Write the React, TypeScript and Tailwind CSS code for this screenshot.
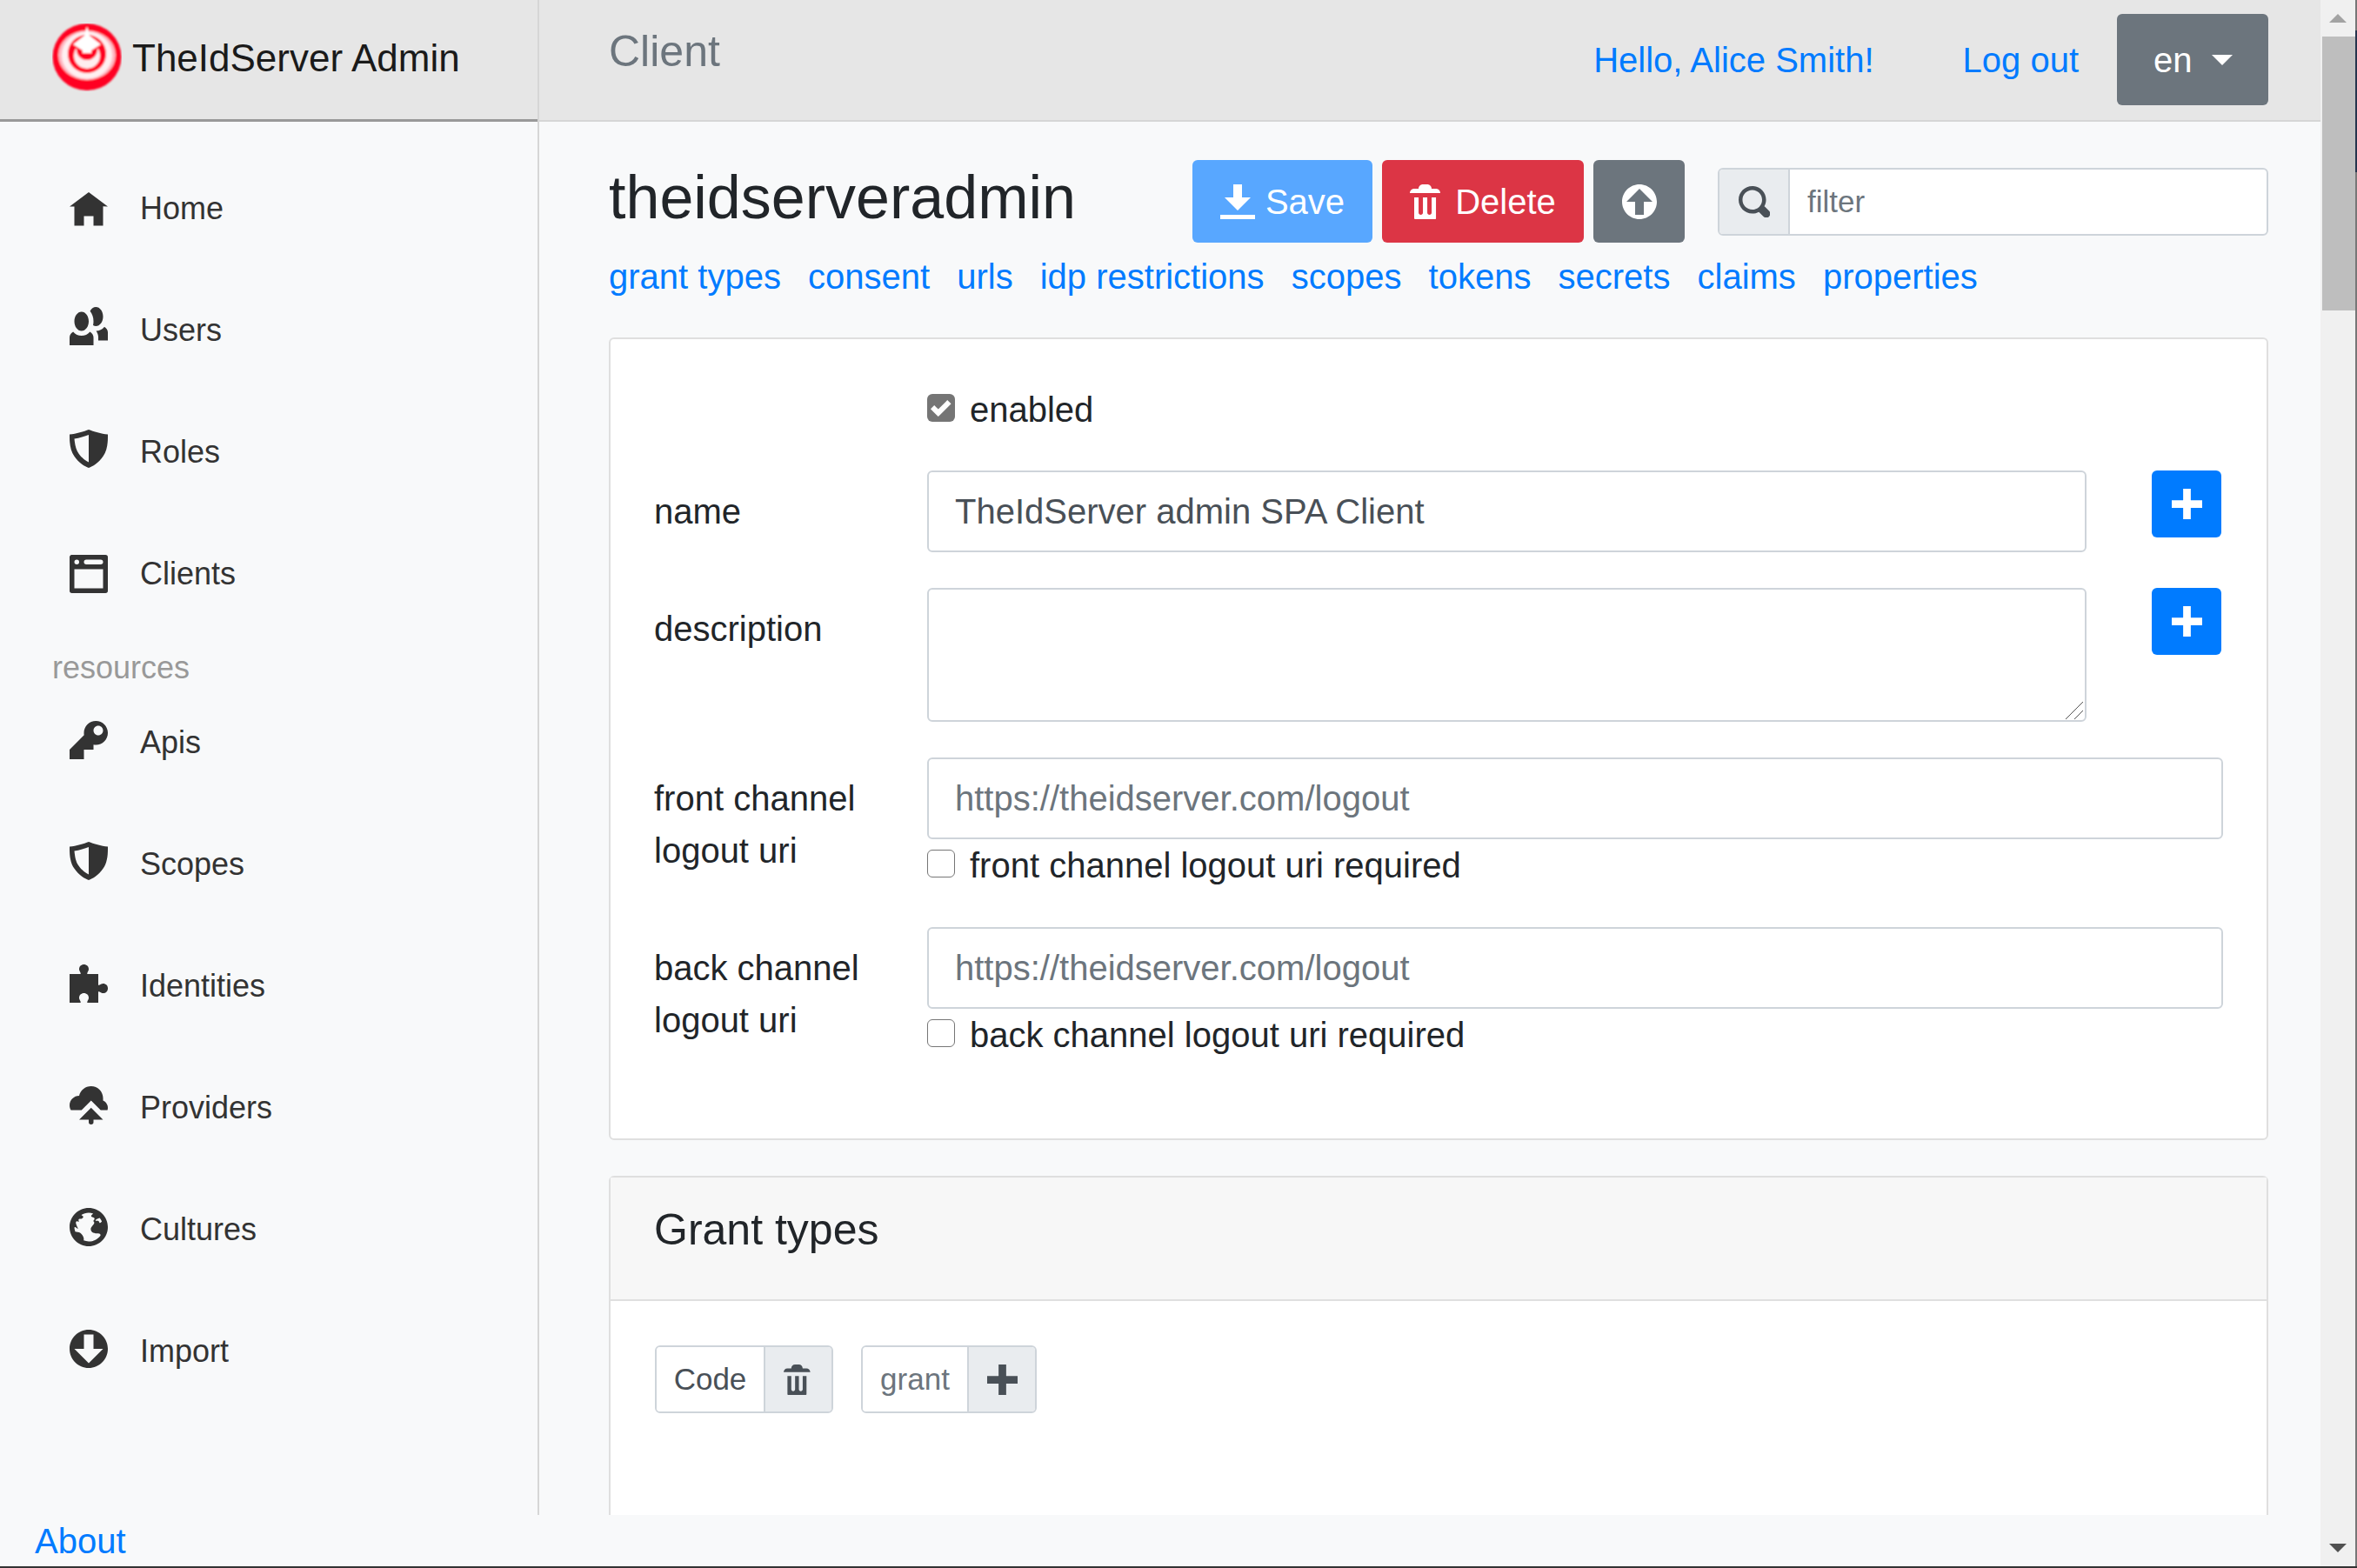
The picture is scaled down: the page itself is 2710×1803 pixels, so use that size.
import { ReactNode } from "react";

const paths = {
  home: "M4 0l-4 3h1v4h2v-2h2v2h2v-4.03l1 .03-4-3z",
  people:
    "M5.5 0c-.51 0-.95.35-1.22.88.45.54.72 1.28.72 2.13 0 .29-.03.55-.09.81.19.11.38.19.59.19.83 0 1.5-.9 1.5-2s-.67-2-1.5-2zm-3 1c-.83 0-1.5.9-1.5 2s.67 2 1.5 2 1.5-.9 1.5-2-.67-2-1.5-2zm4.75 3.16c-.43.51-1.02.82-1.69.84.27.38.44.84.44 1.34v.66h2v-1.66c0-.52-.31-.97-.75-1.19zm-6.5 1c-.44.22-.75.67-.75 1.19v1.66h5v-1.66c0-.52-.31-.97-.75-1.19-.45.53-1.06.84-1.75.84s-1.3-.32-1.75-.84z",
  shield:
    "M4 0c-1 .4-2.6.9-4 1v.5c0 1.5.2 3 1 4.1C2 7.1 3.2 7.7 4 8c.8-.3 2-.9 3-2.4.8-1.1 1-2.6 1-4.1V1C6.6.9 5 .4 4 0zm0 1.1v5.7c-.6-.3-1.4-.8-2.1-1.8C1.3 4.2 1.1 3 1 1.9c1.1-.1 2.2-.5 3-.8z",
  browser:
    "M.34 0a.5.5 0 0 0-.34.5v7a.5.5 0 0 0 .5.5h7a.5.5 0 0 0 .5-.5v-7a.5.5 0 0 0-.5-.5h-7a.5.5 0 0 0-.09 0 .5.5 0 0 0-.06 0zm1.16 1a.5.5 0 1 1 0 1 .5.5 0 0 1 0-1zm2 0h3a.5.5 0 1 1 0 1h-3a.5.5 0 1 1 0-1zm-2.5 2h6v4h-6v-4z",
  key: "M5.5 0c-1.38 0-2.5 1.12-2.5 2.5 0 .16 0 .32.03.47l-3.03 3.03v2h3v-2h2v-1l.03-.03c.15.03.31.03.47.03 1.38 0 2.5-1.12 2.5-2.5s-1.12-2.5-2.5-2.5zm.5 1c.55 0 1 .45 1 1s-.45 1-1 1-1-.45-1-1 .45-1 1-1z",
  puzzle:
    "M3 0c-.28 0-.54.1-.72.28-.18.18-.28.44-.28.72 0 .28.18.48.28.72.03.06.03.16.03.28h-2.31v6h2.31c0-.12 0-.22-.03-.28-.1-.24-.28-.44-.28-.72 0-.28.1-.54.28-.72.18-.18.44-.28.72-.28.28 0 .54.1.72.28.18.18.28.44.28.72 0 .28-.18.48-.28.72-.03.06-.03.16-.03.28h2.31v-2.31c.12 0 .22 0 .28.03.24.1.44.28.72.28.28 0 .54-.1.72-.28.18-.18.28-.44.28-.72 0-.28-.1-.54-.28-.72-.18-.18-.44-.28-.72-.28-.28 0-.48.18-.72.28-.06.03-.16.03-.28.03v-2.31h-2.31c0-.12 0-.22.03-.28.1-.24.28-.44.28-.72 0-.28-.1-.54-.28-.72-.18-.18-.44-.28-.72-.28z",
  cloudUpload:
    "M4.5 0c-1.21 0-2.27.86-2.5 2-1.1 0-2 .9-2 2 0 .37.11.71.28 1h2.22l2-2 2 2h1.41c.06-.16.09-.32.09-.5 0-.65-.42-1.29-1-1.5v-.5c0-1.38-1.12-2.5-2.5-2.5zm0 4.5l-2.5 2.5h2v.5a.5.5 0 1 0 1 0v-.5h2l-2.5-2.5z",
  globe:
    "M4 0c-2.21 0-4 1.79-4 4s1.79 4 4 4 4-1.79 4-4-1.79-4-4-4zm0 1c.33 0 .64.09.94.19-.21.2-.45.38-.41.56.04.18.69.13.69.5 0 .27-.42.35-.13.66.35.35-.64.98-.66 1.44-.03.83.84.97 1.53.97.42 0 .53.2.5.44-.54.77-1.46 1.25-2.47 1.25-.38 0-.73-.09-1.06-.22.22-.44-.28-1.31-.75-1.59-.23-.23-.72-.14-1-.25-.09-.27-.18-.54-.19-.84.03-.05.08-.09.16-.09.19 0 .45.38.59.34.18-.04-.74-1.31-.31-1.56.2-.12.6.39.47-.16-.12-.51.36-.28.66-.41.26-.11.45-.41.13-.59-.06-.03-.13-.1-.22-.19.45-.27.97-.44 1.53-.44zm2.31 1.09c.18.22.32.46.44.72 0 .01 0 .02 0 .03-.04.07-.11.11-.22.22-.28.28-.32-.21-.44-.31-.13-.12-.6.02-.66-.13-.07-.18.5-.42.88-.53z",
  arrowDown:
    "M4 0c-2.21 0-4 1.79-4 4s1.79 4 4 4 4-1.79 4-4-1.79-4-4-4zm-1 1h2v3h2l-3 3-3-3h2v-3z",
  arrowUp:
    "M4 0c-2.21 0-4 1.79-4 4s1.79 4 4 4 4-1.79 4-4-1.79-4-4-4zm0 1l3 3h-2v3h-2v-3h-2l3-3z",
  download: "M3 0v3h-2l3 3 3-3h-2v-3h-2zm-3 7v1h8v-1h-8z",
  trash:
    "M3 0c-.55 0-1 .45-1 1h-1c-.55 0-1 .45-1 1h7c0-.55-.45-1-1-1h-1c0-.55-.45-1-1-1h-1zm-2 3v4.81c0 .11.08.19.19.19h4.63c.11 0 .19-.08.19-.19v-4.81h-1v3.5c0 .28-.22.5-.5.5s-.5-.22-.5-.5v-3.5h-1v3.5c0 .28-.22.5-.5.5s-.5-.22-.5-.5v-3.5h-1z",
  plus: "M3 0v3h-3v2h3v3h2v-3h3v-2h-3v-3h-2z",
  search:
    "M3.5 0c-1.93 0-3.5 1.57-3.5 3.5s1.57 3.5 3.5 3.5c.59 0 1.17-.14 1.66-.41a1 1 0 0 0 .13.13l1 1a1.02 1.02 0 1 0 1.44-1.44l-1-1a1 1 0 0 0-.16-.13c.27-.49.44-1.06.44-1.66 0-1.93-1.57-3.5-3.5-3.5zm0 1c1.39 0 2.5 1.11 2.5 2.5 0 .66-.24 1.27-.66 1.72-.01.01-.02.02-.03.03a1 1 0 0 0-.13.13c-.44.4-1.04.63-1.69.63-1.39 0-2.5-1.11-2.5-2.5s1.11-2.5 2.5-2.5z",
  check: "M6.41 1l-.69.72-2.78 2.78-.81-.78-.72-.72-1.41 1.41.72.72 1.5 1.5.69.72.72-.72 3.5-3.5.72-.72-1.44-1.41z",
};

function Icon({ d, className }: { d: string; className?: string }) {
  return (
    <svg viewBox="0 0 8 8" className={className} fill="currentColor" fillRule="evenodd">
      <path d={d} />
    </svg>
  );
}

function Logo() {
  return (
    <svg viewBox="0 0 80 78" className="w-[80px] h-[78px] shrink-0">
      <defs>
        <filter id="soft">
          <feGaussianBlur stdDeviation="0.8" />
        </filter>
      </defs>
      <g filter="url(#soft)">
        <ellipse cx="40" cy="38.5" rx="39.5" ry="38.5" fill="#ff0022" />
        <ellipse cx="40" cy="36.5" rx="33" ry="28.5" fill="#ffb9c3" />
        <ellipse cx="40" cy="36.5" rx="29" ry="27" fill="#fff0f2" />
        <ellipse cx="40" cy="35" rx="22" ry="22" fill="#ff0022" />
        <ellipse cx="40" cy="37" rx="15" ry="15" fill="#ffeef0" />
        <ellipse cx="40" cy="30" rx="12" ry="12" fill="#ff0022" />
        <path d="M40 3l3 11 13 10-11 7v3h-10v-3l-11-7 13-10z" fill="#ffffff" />
      </g>
    </svg>
  );
}

function NavItem({ d, label, shift }: { d: string; label: string; shift?: string }) {
  return (
    <a className="h-[140px] pl-[80px] flex items-center gap-[37px] text-[36px] text-[#333333]">
      <Icon d={d} className={`w-[44px] h-[44px] shrink-0 ${shift ?? ""}`} />
      <span>{label}</span>
    </a>
  );
}

function Sidebar() {
  return (
    <aside className="w-[620px] shrink-0 border-r-2 border-[#d6d6d6] flex flex-col">
      <div className="h-[140px] bg-[#e6e6e6] border-b-[3px] border-[#999999] pl-[60px] pb-[6px] flex items-center gap-[12px] text-[44px] text-[#1a1a1a]">
        <Logo />
        <span className="translate-y-[1px]">TheIdServer Admin</span>
      </div>
      <nav className="pt-[30px] flex flex-col">
        <NavItem d={paths.home} label="Home" shift="translate-y-[3px]" />
        <NavItem d={paths.people} label="Users" shift="-translate-y-[5px]" />
        <NavItem d={paths.shield} label="Roles" shift="-translate-y-[4px]" />
        <NavItem d={paths.browser} label="Clients" />
        <div className="h-[54px] pl-[60px] pt-[20px] text-[36px] leading-[36px] text-[#999999]">resources</div>
        <NavItem d={paths.key} label="Apis" shift="-translate-y-[3px]" />
        <NavItem d={paths.shield} label="Scopes" shift="-translate-y-[4px]" />
        <NavItem d={paths.puzzle} label="Identities" shift="-translate-y-[3px]" />
        <NavItem d={paths.cloudUpload} label="Providers" shift="-translate-y-[3px]" />
        <NavItem d={paths.globe} label="Cultures" shift="-translate-y-[3px]" />
        <NavItem d={paths.arrowDown} label="Import" shift="-translate-y-[3px]" />
      </nav>
    </aside>
  );
}

function TopBar() {
  return (
    <header className="h-[140px] shrink-0 bg-[#e6e6e6] border-b-[2px] border-[#d6d6d6] pl-[80px] pr-[60px] flex items-start">
      <div className="mt-[29px] text-[50px] leading-[60px] text-[#6c757d]">Client</div>
      <div className="ml-auto mt-[16px] flex items-center text-[40px] text-[#007bff]">
        <a className="mr-[102px]">Hello, Alice Smith!</a>
        <a className="mr-[44px]">Log out</a>
        <button className="w-[174px] h-[105px] pl-[42px] rounded-[6px] bg-[#6c757d] text-white flex items-center gap-[22px]">
          en
          <span className="w-0 h-0 border-x-[12px] border-x-transparent border-t-[12px] border-t-white" />
        </button>
      </div>
    </header>
  );
}

function Btn({ className, children }: { className: string; children: ReactNode }) {
  return (
    <button className={`h-[95px] rounded-[6px] text-white text-[40px] flex items-center justify-center gap-[12px] ${className}`}>
      {children}
    </button>
  );
}

function TitleRow() {
  return (
    <div className="flex items-center h-[95px]">
      <h1 className="w-[671px] shrink-0 pb-[10px] text-[70px] leading-[84px] text-[#212529]">theidserveradmin</h1>
      <div className="flex gap-[11px]">
        <Btn className="w-[207px] bg-[#58a7ff]">
          <Icon d={paths.download} className="w-[40px] h-[40px]" />
          Save
        </Btn>
        <Btn className="w-[232px] bg-[#dc3545]">
          <Icon d={paths.trash} className="w-[40px] h-[40px]" />
          Delete
        </Btn>
        <Btn className="w-[105px] bg-[#6c757d]">
          <Icon d={paths.arrowUp} className="w-[40px] h-[40px]" />
        </Btn>
      </div>
      <div className="ml-[38px] flex-1 h-[78px] flex border-2 border-[#ced4da] rounded-[6px] overflow-hidden bg-white">
        <div className="w-[81px] shrink-0 bg-[#e9ecef] border-r-2 border-[#ced4da] flex items-center justify-center text-[#495057]">
          <Icon d={paths.search} className="w-[36px] h-[36px]" />
        </div>
        <input
          placeholder="filter"
          className="flex-1 min-w-0 pl-[20px] pt-[2px] text-[35px] outline-none placeholder:text-[#6c757d]"
        />
      </div>
    </div>
  );
}

const sectionLinks = [
  "grant types",
  "consent",
  "urls",
  "idp restrictions",
  "scopes",
  "tokens",
  "secrets",
  "claims",
  "properties",
];

function SectionLinks() {
  return (
    <div className="mt-[9px] flex gap-[31.1px] text-[40px] leading-[60px] text-[#007bff]">
      {sectionLinks.map((l) => (
        <a key={l}>{l}</a>
      ))}
    </div>
  );
}

function CheckRow({ label, checked }: { label: string; checked?: boolean }) {
  return (
    <label className="h-[60px] flex items-center gap-[17px] text-[40px] text-[#212529]">
      {checked ? (
        <span className="w-[32px] h-[32px] -translate-y-[2px] rounded-[6px] bg-[#757575] text-white flex items-center justify-center">
          <Icon d={paths.check} className="w-[24px] h-[24px]" />
        </span>
      ) : (
        <span className="w-[32px] h-[32px] -translate-y-[2px] rounded-[6px] border border-[#767676] bg-white" />
      )}
      {label}
    </label>
  );
}

function Field({ label, className, children }: { label: ReactNode; className?: string; children: ReactNode }) {
  return (
    <div className={`flex ${className ?? ""}`}>
      <div className="w-[314px] shrink-0 pt-[17px] text-[40px] leading-[60px] text-[#212529]">{label}</div>
      <div className="flex-1 min-w-0">{children}</div>
    </div>
  );
}

const inputCls =
  "w-full h-[94px] px-[30px] border-2 border-[#ced4da] rounded-[6px] bg-white text-[40px] text-[#495057] outline-none placeholder:text-[#6c757d]";

function AddButton() {
  return (
    <button className="ml-[75px] mr-[2px] w-[80px] h-[77px] shrink-0 rounded-[6px] bg-[#007bff] text-white flex items-center justify-center">
      <Icon d={paths.plus} className="w-[35px] h-[35px]" />
    </button>
  );
}

function DescriptionBox() {
  return (
    <div className="relative flex-1 min-w-0 h-[154px]">
      <textarea className="w-full h-full block resize-none px-[30px] py-[15px] border-2 border-[#ced4da] rounded-[6px] bg-white outline-none" />
      <svg viewBox="0 0 20 20" className="absolute right-[4px] bottom-[3px] w-[20px] h-[20px]" stroke="#555555" strokeWidth="1" fill="none">
        <path d="M0 20L20 0M10 20L20 10" />
      </svg>
    </div>
  );
}

function ClientForm() {
  return (
    <section className="mt-[40px] border-2 border-[#dfdfdf] rounded-[6px] bg-white p-[50px] pt-[51px]">
      <div className="pl-[314px] mb-[40px]">
        <CheckRow label="enabled" checked />
      </div>
      <Field label="name" className="mb-[41px]">
        <div className="flex">
          <input readOnly value="TheIdServer admin SPA Client" className={inputCls} />
          <AddButton />
        </div>
      </Field>
      <Field label="description" className="mb-[41px]">
        <div className="flex">
          <DescriptionBox />
          <AddButton />
        </div>
      </Field>
      <Field label={<>front channel<br />logout uri</>} className="mb-[41px]">
        <input placeholder="https://theidserver.com/logout" className={inputCls} />
        <CheckRow label="front channel logout uri required" />
      </Field>
      <Field label={<>back channel<br />logout uri</>} className="mb-[39px]">
        <input placeholder="https://theidserver.com/logout" className={inputCls} />
        <CheckRow label="back channel logout uri required" />
      </Field>
    </section>
  );
}

function Chip({ d, label, muted, textWidth }: { d: string; label: string; muted?: boolean; textWidth: string }) {
  return (
    <div className="h-[78px] flex border-2 border-[#ced4da] rounded-[6px] overflow-hidden text-[35px]">
      <div className={`${textWidth} flex items-center justify-center bg-white ${muted ? "text-[#6c757d]" : "text-[#495057]"}`}>
        {label}
      </div>
      <div className="w-[78px] bg-[#e9ecef] border-l-2 border-[#ced4da] text-[#495057] flex items-center justify-center">
        <Icon d={d} className="w-[35px] h-[35px]" />
      </div>
    </div>
  );
}

function GrantTypes() {
  return (
    <section className="mt-[41px] border-2 border-[#dfdfdf] rounded-[6px] bg-white h-[600px] shrink-0">
      <div className="h-[142px] pt-[30px] pl-[50px] border-b-2 border-[#dfdfdf] bg-[#f7f7f7] text-[50px] leading-[60px] text-[#212529]">
        Grant types
      </div>
      <div className="pt-[51px] pl-[51px] flex gap-[32px]">
        <Chip d={paths.trash} label="Code" textWidth="w-[123px]" />
        <Chip d={paths.plus} label="grant" muted textWidth="w-[120px]" />
      </div>
    </section>
  );
}

function Scrollbar() {
  return (
    <div className="w-[42px] shrink-0 flex">
      <div className="w-[40px] bg-[#f0f0f0] flex flex-col items-end">
        <div className="w-full h-[42px] flex items-center justify-center">
          <svg viewBox="0 0 20 10" className="w-[20px] h-[10px]" fill="#a3a3a3">
            <path d="M10 0l10 10H0z" />
          </svg>
        </div>
        <div className="w-[38px] h-[315px] bg-[#bebebe]" />
        <div className="w-full mt-auto h-[42px] flex items-center justify-center">
          <svg viewBox="0 0 20 10" className="w-[20px] h-[10px]" fill="#505050">
            <path d="M0 0h20L10 10z" />
          </svg>
        </div>
      </div>
      <div className="w-[2px] flex flex-col bg-[#777777]">
        <div className="h-[35px]" />
        <div className="h-[163px] bg-[#26344d]" />
      </div>
    </div>
  );
}

export default function App() {
  return (
    <div className="w-[2710px] h-[1803px] overflow-hidden flex border-b-2 border-[#333333] bg-[#f8f9fa] font-['Liberation_Sans',Arial,sans-serif]">
      <div className="flex-1 min-w-0 flex flex-col">
        <div className="flex-1 min-h-0 flex">
          <Sidebar />
          <main className="flex-1 min-w-0 flex flex-col overflow-hidden">
            <TopBar />
            <div className="pl-[80px] pr-[60px] pt-[44px]">
              <TitleRow />
              <SectionLinks />
              <ClientForm />
              <GrantTypes />
            </div>
          </main>
        </div>
        <footer className="h-[59px] shrink-0 pl-[40px] flex items-center text-[40px] text-[#007bff]">
          <a>About</a>
        </footer>
      </div>
      <Scrollbar />
    </div>
  );
}
